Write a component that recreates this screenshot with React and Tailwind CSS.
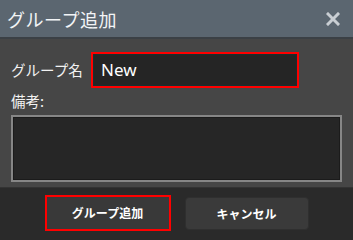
import React from "react";

const jp = { fontFamily: '"Noto Sans CJK JP", "Noto Sans", sans-serif' };

export default function App() {
  return (
    <div className="w-[353px] h-[240px] flex flex-col overflow-hidden" style={jp}>
      <div className="h-[39px] shrink-0 bg-[#5b6670] border-b-2 border-[#3b4045] flex items-center justify-between pl-[7px] pr-[13px]">
        <span className="text-[18px] leading-none text-[#f2f4f6] tracking-[0.5px]">グループ追加</span>
        <svg width="14" height="14" viewBox="0 0 14 14">
          <path d="M2 2 L12 12 M12 2 L2 12" stroke="#c9ced3" strokeWidth="3" strokeLinecap="square" />
        </svg>
      </div>

      <div className="h-[148px] shrink-0 bg-[#464646] px-[11px] pt-[13px]">
        <div className="flex items-center">
          <label className="w-[80px] text-[14.5px] text-[#f2f2f2]">グループ名</label>
          <div className="w-[208px] h-[36px] border-2 border-[#ff0000] bg-[#252525] shadow-[inset_0_0_0_1px_#17302e] flex items-center px-[8px]">
            <span className="text-[17px] text-white" style={{ fontFamily: '"Noto Sans", sans-serif' }}>New</span>
          </div>
        </div>
        <div className="mt-[3px] text-[14.5px] leading-[20px] text-[#f2f2f2]">備考:</div>
        <div className="mt-[4px] h-[67px] border-2 border-[#868686] bg-[#262626] shadow-[inset_0_0_0_1px_#1b1b1b]" />
      </div>

      <div className="flex-1 bg-[#2a2a2a] border-t border-[#333] flex justify-center items-start gap-[14px] pt-[7px]">
        <button className="w-[126px] h-[36px] border-2 border-[#ff0000] bg-[#393939] text-[12px] font-bold text-white">
          グループ追加
        </button>
        <button className="mt-[2px] w-[124px] h-[33px] rounded-[4px] bg-[#3a3a3a] border border-[#2f2f2f] text-[12px] font-bold text-white">
          キャンセル
        </button>
      </div>
    </div>
  );
}
